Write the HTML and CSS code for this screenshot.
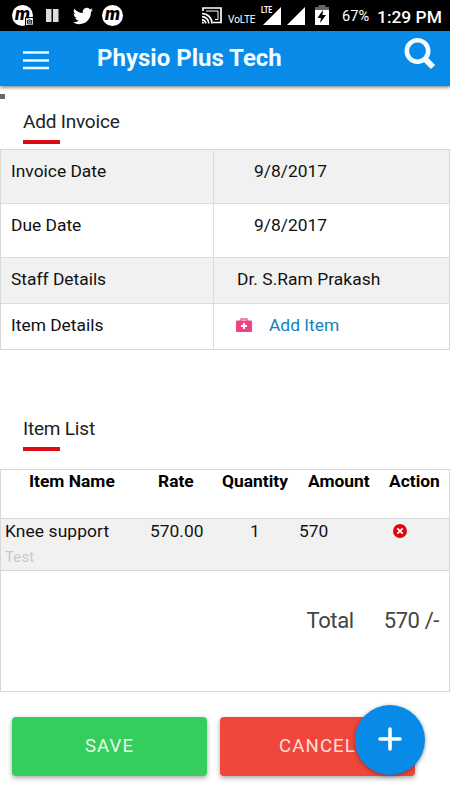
FILE: index.html
```html
<!DOCTYPE html>
<html lang="en">
<head>
<meta charset="utf-8">
<title>Physio Plus Tech</title>
<link rel="stylesheet" href="styles.css">
</head>
<body>
<div class="status">
  <div class="messenger">m
    <svg class="camera" width="7" height="7" viewBox="0 0 9 8"><rect width="9" height="8" fill="#fff"/><path d="M1 2h2l.7-1h1.600L6 2h2v5H1z" fill="#222"/><circle cx="4.500" cy="4.400" r="1.500" fill="none" stroke="#fff" stroke-width=".8"/></svg>
  </div>
  <svg class="pause" width="13" height="13" viewBox="0 0 13 13"><path d="M0 0h5.500v13H0zM7 0h5.500v13H7z" fill="#ddd"/></svg>
  <svg class="bird" width="20" height="20" viewBox="0 0 24 24"><path fill="#fff" d="M23.950 4.570a10 10 0 0 1-2.820.77 4.960 4.960 0 0 0 2.160-2.720c-.95.55-2 .95-3.130 1.180a4.920 4.920 0 0 0-8.380 4.480C7.690 8.090 4.070 6.130 1.640 3.160a4.930 4.930 0 0 0 1.520 6.570 4.900 4.900 0 0 1-2.230-.61v.06a4.920 4.920 0 0 0 3.950 4.830 5 5 0 0 1-2.210.08 4.940 4.940 0 0 0 4.600 3.420A9.870 9.870 0 0 1 0 19.540a13.990 13.990 0 0 0 7.550 2.210c9.050 0 14-7.500 14-13.980l-.02-.64a9.940 9.940 0 0 0 2.420-2.560z"/></svg>
  <div class="messenger second">m</div>
  <svg class="cast" width="20" height="17" viewBox="0 0 20 17"><g fill="none" stroke="#fff" stroke-width="1.700"><path d="M1 4V1h18v14.500h-8"/><path d="M0 6.500a10 10 0 0 1 10 10M0 9.700a6.800 6.800 0 0 1 6.800 6.800M0 12.800a3.700 3.700 0 0 1 3.700 3.700"/><path d="M4 4h12v8.500h-3" stroke-width="1"/></g><path d="M0 14.500a2 2 0 0 1 2 2H0z" fill="#fff"/></svg>
  <span class="volte">VoLTE</span>
  <div class="lte"><svg width="18" height="18" viewBox="0 0 18 18"><path d="M18 0v18H0z" fill="#fff"/></svg><span class="lte-label">LTE</span></div>
  <svg class="signal" width="18" height="18" viewBox="0 0 18 18"><path d="M18 0v18H0z" fill="#fff"/></svg>
  <svg class="battery" width="14" height="20" viewBox="0 0 14 20"><path d="M0 2h3.500V0h7v2H14v5H0z" fill="#666"/><path d="M0 5h14v15H0z" fill="#fff"/><path d="M8 5 2.500 13H6l-1 5 6-8H7.500z" fill="#000"/></svg>
  <span class="percent">67%</span>
  <span class="clock">1:29 PM</span>
</div>
<header class="bar">
  <svg class="menu" width="26" height="19" viewBox="0 0 26 19"><path d="M0 1.500h26M0 9.500h26M0 17h26" stroke="#e6faff" stroke-width="2.300"/></svg>
  <h1 class="title">Physio Plus Tech</h1>
  <svg class="search" width="32" height="32" viewBox="0 0 32 32"><circle cx="13.500" cy="13" r="10.700" fill="none" stroke="#f2fbff" stroke-width="4.600"/><path d="m20.500 20.500 8.500 8.500" stroke="#f2fbff" stroke-width="6"/></svg>
</header>
<main>
  <div class="tick"></div>
  <h2 class="heading">Add Invoice</h2>
  <section class="details">
    <div class="row shaded"><div class="label">Invoice Date</div><div class="value date">9/8/2017</div></div>
    <div class="row"><div class="label">Due Date</div><div class="value date">9/8/2017</div></div>
    <div class="row shaded staff"><div class="label">Staff Details</div><div class="value doctor">Dr. S.Ram Prakash</div></div>
    <div class="row item"><div class="label">Item Details</div><div class="value add"><svg width="16" height="14" viewBox="0 0 16 14"><path d="M5 3V1h6v2" fill="none" stroke="#f25c94" stroke-width="1.300"/><rect y="2.500" width="16" height="11.500" rx="1" fill="#ed4385"/><path d="M8 5v6M5 8h6" stroke="#fff" stroke-width="2"/></svg><a>Add Item</a></div></div>
  </section>
  <h2 class="heading list-heading">Item List</h2>
  <section class="items">
    <div class="cols head"><b class="c1">Item Name</b><b class="c2">Rate</b><b class="c3">Quantity</b><b class="c4">Amount</b><b class="c5">Action</b></div>
    <div class="cols entry">
      <div class="name">Knee support<small>Test</small></div><div class="rate">570.00</div><div class="qty">1</div><div class="amount">570</div>
      <div class="remove"><svg width="14" height="14" viewBox="0 0 14 14"><circle cx="7" cy="7" r="7" fill="#df0710"/><path d="m4.300 4.300 5.400 5.400m0-5.400-5.400 5.400" stroke="#fff" stroke-width="1.700"/></svg></div>
    </div>
    <div class="total"><span>Total</span><span>570 /-</span></div>
  </section>
  <div class="actions"><button class="btn save">SAVE</button><button class="btn cancel">CANCEL</button></div>
</main>
<div class="fab"><svg width="24" height="24" viewBox="0 0 24 24"><path d="M12 2v20M2 12h20" stroke="#fff" stroke-width="3.600" stroke-linecap="round"/></svg></div>
</body>
</html>
```
FILE: styles.css
```css
* { box-sizing: border-box; }
body { margin: 0; width: 450px; height: 800px; overflow: hidden; background: #fff; color: #111; font: 17.4px/20px Roboto, sans-serif; }
h1, h2 { margin: 0; }
svg { display: block; flex: none; }
.status { height: 31px; background: #000; color: #fff; display: flex; align-items: flex-start; white-space: nowrap; }
.messenger { position: relative; flex: none; width: 21px; height: 21px; margin: 5px 0 0 12px; border-radius: 50%; background: #fff; color: #000; font: italic 900 18px/18px Roboto, sans-serif; text-align: center; }
.messenger.second { margin-left: 9px; }
.camera { position: absolute; right: -1px; bottom: 0; border: 1px solid #000; box-sizing: content-box; }
.pause { margin: 9px 0 0 13px; }
.bird { margin: 6px 0 0 14px; }
.cast { margin: 7px 0 0 79px; }
.volte { width: 28px; margin: 13px 0 0 6px; font-size: 10px; line-height: 13px; }
.lte { position: relative; margin: 7px 0 0 7px; }
.lte-label { position: absolute; left: -2px; top: -1px; font: 700 9px/9px Roboto, sans-serif; transform: scaleX(.78); transform-origin: left; color: #fff; text-shadow: 1px 0 #000, 0 1px #000; }
.signal { margin: 7px 0 0 6px; }
.battery { margin: 5px 0 0 10px; }
.percent { width: 27px; margin: 6px 0 0 13px; font-size: 14.6px; }
.clock { margin: 7px 0 0 8px; font-size: 17.4px; font-weight: 500; }
.bar { height: 55px; background: #088ae9; display: flex; box-shadow: 0 1px 4px rgba(0,0,0,.6); }
.menu { margin: 20px 0 0 23px; }
.title { width: 190px; margin: 12px 0 0 48px; font-size: 24px; line-height: 30px; font-weight: 700; color: #f2fbff; white-space: nowrap; }
.search { margin: 7px 0 0 117px; }
.tick { width: 5px; height: 5px; margin-top: 8px; background: #68686c; }
.heading { height: 32px; margin: 12px 0 6px 23px; font-size: 19px; line-height: 22px; font-weight: 400; letter-spacing: -.2px; color: #222; }
.heading::after { content: ""; display: block; width: 37px; height: 4px; margin-top: 7px; background: #d90b14; }
.details { border: 1px solid #d8d8d8; }
.row { display: grid; grid-template-columns: 213px 1fr; height: 54px; border-bottom: 1px solid #dcdcdc; }
.shaded { background: #f1f1f1; }
.staff { height: 46px; }
.item { height: 45px; border: 0; }
.label { border-right: 1px solid #dcdcdc; padding: 11px 0 0 10px; }
.value { padding-top: 11px; }
.date { padding-left: 40px; }
.doctor { padding-left: 23px; letter-spacing: .04px; }
.add { display: flex; padding-left: 22px; color: #1581c4; }
.add svg { margin: 3px 17px 0 0; }
.list-heading { margin: 68px 0 19px 23px; }
.items { height: 223px; border: 1px solid #d8d8d8; }
.cols { display: grid; grid-template-columns: 141px 72px 84px 87px 1fr; }
.head { height: 49px; padding-top: 1px; border-bottom: 1px solid #d8d8d8; color: #000; }
.c1 { padding-left: 28px; } .c2 { padding-left: 16px; } .c3 { padding-left: 8px; } .c4 { padding-left: 10px; } .c5 { padding-left: 4px; }
.entry { height: 52px; padding-top: 2px; background: #f1f1f1; border-bottom: 1px solid #d8d8d8; }
.name { padding-left: 4px; letter-spacing: .1px; }
.rate { padding-left: 8px; } .qty { padding-left: 36px; } .amount { padding-left: 1px; } .remove { padding: 3px 0 0 8px; }
.name small { display: block; margin-top: 6px; font-size: 15px; color: #c9c9c9; }
.total { display: flex; justify-content: flex-end; gap: 30px; padding: 37px 10px 0 0; font-size: 22px; line-height: 26px; letter-spacing: -.4px; color: #444; }
.actions { display: flex; gap: 13px; padding: 25px 0 0 12px; }
.btn { width: 195px; height: 59px; padding: 0; border: 0; border-radius: 4px; font: 18.6px/59px Roboto, sans-serif; letter-spacing: 1.1px; color: #e6fbe9; background: #35cd5e; box-shadow: 0 2px 5px rgba(0,0,0,.35); }
.cancel { background: #f1473b; color: #ffdfdc; }
.fab { position: absolute; left: 355px; top: 705px; width: 70px; height: 70px; border-radius: 50%; background: #088ae9; display: grid; place-items: center; box-shadow: 0 1px 4px rgba(0,0,0,.4); }
.fab svg { margin-top: -3px; }
```
